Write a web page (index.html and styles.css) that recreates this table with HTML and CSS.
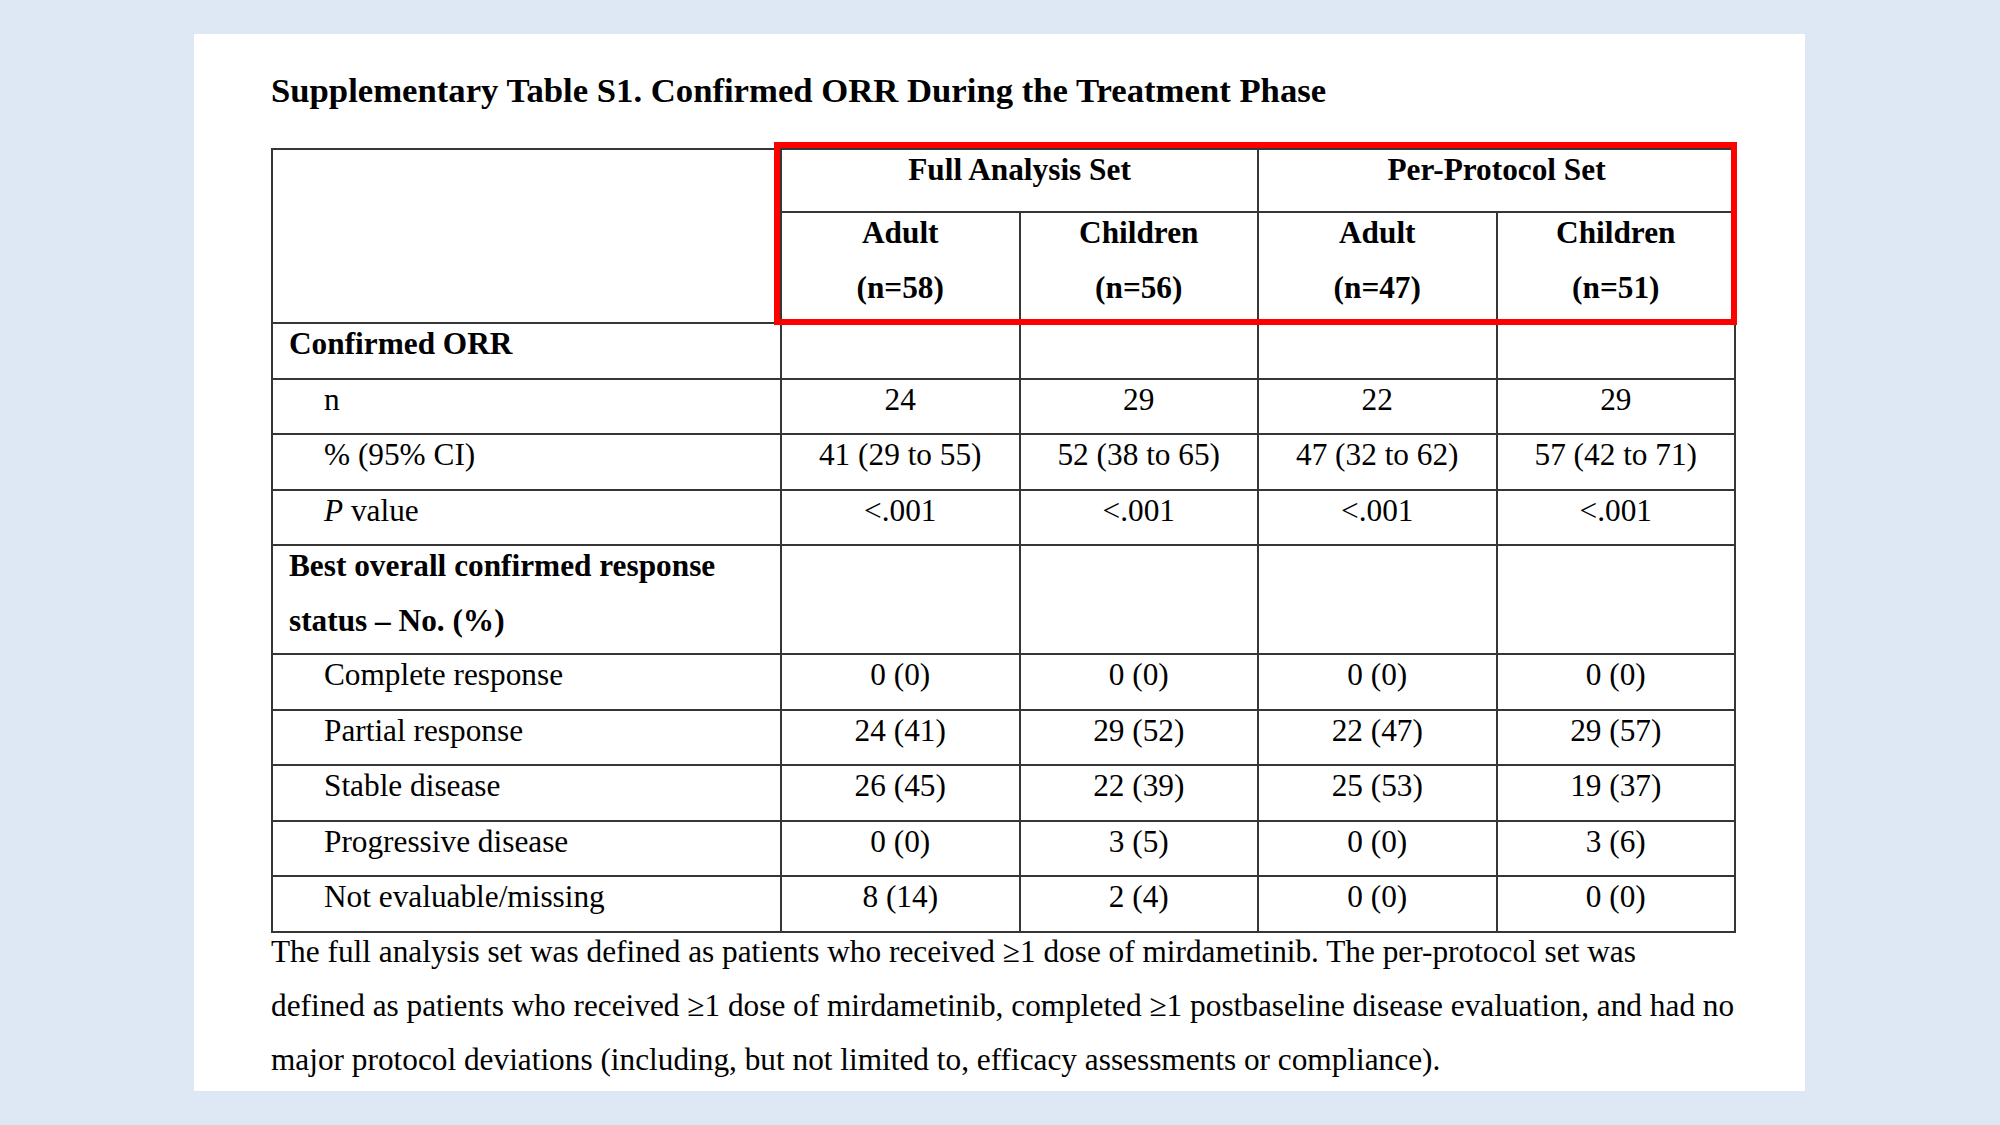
FILE: index.html
```html
<!DOCTYPE html>
<html lang="en">
<head>
<meta charset="utf-8">
<title>Supplementary Table S1</title>
<link rel="stylesheet" href="styles.css">
</head>
<body>
<div class="panel">
  <h1 class="title">Supplementary Table S1. Confirmed ORR During the Treatment Phase</h1>
  <div class="table-wrap">
    <table class="orr">
      <colgroup>
        <col class="col-label">
        <col class="col-val">
        <col class="col-val">
        <col class="col-val">
        <col class="col-val">
      </colgroup>
      <thead>
        <tr class="h1row">
          <th rowspan="2" class="blank"></th>
          <th colspan="2"><div class="in">Full Analysis Set</div></th>
          <th colspan="2"><div class="in">Per-Protocol Set</div></th>
        </tr>
        <tr class="h2row">
          <th><div class="in">Adult<br>(n=58)</div></th>
          <th><div class="in">Children<br>(n=56)</div></th>
          <th><div class="in">Adult<br>(n=47)</div></th>
          <th><div class="in">Children<br>(n=51)</div></th>
        </tr>
      </thead>
      <tbody>
        <tr class="row">
          <td class="lbl sec"><div class="in">Confirmed ORR</div></td>
          <td></td><td></td><td></td><td></td>
        </tr>
        <tr class="row">
          <td class="lbl sub"><div class="in">n</div></td>
          <td><div class="in">24</div></td>
          <td><div class="in">29</div></td>
          <td><div class="in">22</div></td>
          <td><div class="in">29</div></td>
        </tr>
        <tr class="row">
          <td class="lbl sub"><div class="in">% (95% CI)</div></td>
          <td><div class="in">41 (29 to 55)</div></td>
          <td><div class="in">52 (38 to 65)</div></td>
          <td><div class="in">47 (32 to 62)</div></td>
          <td><div class="in">57 (42 to 71)</div></td>
        </tr>
        <tr class="row">
          <td class="lbl sub"><div class="in"><i>P</i> value</div></td>
          <td><div class="in">&lt;.001</div></td>
          <td><div class="in">&lt;.001</div></td>
          <td><div class="in">&lt;.001</div></td>
          <td><div class="in">&lt;.001</div></td>
        </tr>
        <tr class="row2">
          <td class="lbl sec"><div class="in">Best overall confirmed response<br>status – No. (%)</div></td>
          <td></td><td></td><td></td><td></td>
        </tr>
        <tr class="row">
          <td class="lbl sub"><div class="in">Complete response</div></td>
          <td><div class="in">0 (0)</div></td>
          <td><div class="in">0 (0)</div></td>
          <td><div class="in">0 (0)</div></td>
          <td><div class="in">0 (0)</div></td>
        </tr>
        <tr class="row">
          <td class="lbl sub"><div class="in">Partial response</div></td>
          <td><div class="in">24 (41)</div></td>
          <td><div class="in">29 (52)</div></td>
          <td><div class="in">22 (47)</div></td>
          <td><div class="in">29 (57)</div></td>
        </tr>
        <tr class="row">
          <td class="lbl sub"><div class="in">Stable disease</div></td>
          <td><div class="in">26 (45)</div></td>
          <td><div class="in">22 (39)</div></td>
          <td><div class="in">25 (53)</div></td>
          <td><div class="in">19 (37)</div></td>
        </tr>
        <tr class="row">
          <td class="lbl sub"><div class="in">Progressive disease</div></td>
          <td><div class="in">0 (0)</div></td>
          <td><div class="in">3 (5)</div></td>
          <td><div class="in">0 (0)</div></td>
          <td><div class="in">3 (6)</div></td>
        </tr>
        <tr class="row">
          <td class="lbl sub"><div class="in">Not evaluable/missing</div></td>
          <td><div class="in">8 (14)</div></td>
          <td><div class="in">2 (4)</div></td>
          <td><div class="in">0 (0)</div></td>
          <td><div class="in">0 (0)</div></td>
        </tr>
      </tbody>
    </table>
    <div class="highlight"></div>
  </div>
  <p class="note">The full analysis set was defined as patients who received ≥1 dose of mirdametinib. The per-protocol set was<br>defined as patients who received ≥1 dose of mirdametinib, completed ≥1 postbaseline disease evaluation, and had no<br>major protocol deviations (including, but not limited to, efficacy assessments or compliance).</p>
</div>
</body>
</html>
```
FILE: styles.css
```css
html, body {
  margin: 0;
  padding: 0;
}

body {
  background: #dde8f4;
  font-family: "Liberation Serif", "Times New Roman", serif;
  color: #000;
  padding-top: 34px;
  height: 1125px;
  box-sizing: border-box;
}

.panel {
  margin-left: 194px;
  width: 1611px;
  height: 1057px;
  background: #fff;
  box-sizing: border-box;
  padding: 38px 0 0 77px;
}

.title {
  margin: 0 0 38px 0;
  font-size: 34.7px;
  font-weight: bold;
  line-height: 37px;
  height: 38px;
}

.table-wrap {
  position: relative;
  width: 1463px;
}

.orr {
  border-collapse: collapse;
  table-layout: fixed;
  width: 1463px;
  font-size: 31.3px;
  line-height: 55px;
}

.col-label { width: 509px; }
.col-val { width: 238.5px; }

.orr th,
.orr td {
  border: 2px solid #363636;
  padding: 0;
  vertical-align: top;
  text-align: center;
}

.orr th {
  font-weight: bold;
}

.in {
  margin-top: -8px;
  white-space: nowrap;
}

.h1row { height: 63px; }
.h2row { height: 111px; }
.row { height: 55.5px; }
.row2 { height: 109px; }

.orr td.lbl {
  text-align: left;
}

.lbl.sec {
  font-weight: bold;
  padding-left: 16px;
}

.lbl.sub {
  padding-left: 51px;
}

.highlight {
  position: absolute;
  left: 503px;
  top: -6px;
  width: 963px;
  height: 183px;
  border: 6px solid #ff0000;
  box-sizing: border-box;
  pointer-events: none;
}

.note {
  margin: -8px 0 0 0;
  font-size: 31.3px;
  line-height: 54px;
  white-space: nowrap;
}
```
